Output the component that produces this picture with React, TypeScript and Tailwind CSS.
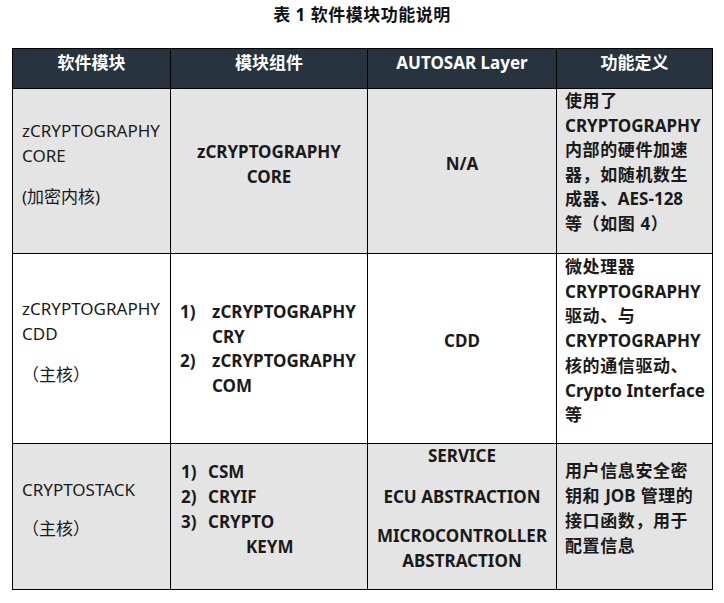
const font = "font-['Noto_Sans','Noto_Sans_CJK_SC',sans-serif]";

const cell = "border border-black align-top p-0";

export default function App() {
    return (
        <div className={`w-[724px] h-[603px] bg-white text-[#1a1a1a] ${font}`}>
            <h1 className="pt-[4px] h-[48px] text-center text-[17px] leading-[22px] font-bold tracking-[0.5px] text-[#111]">
                表 1 软件模块功能说明
            </h1>
            <table className="ml-[12px] w-[700px] table-fixed border-collapse text-[17px] leading-[25px]">
                <colgroup>
                    <col className="w-[158px]" />
                    <col className="w-[197px]" />
                    <col className="w-[189px]" />
                    <col className="w-[156px]" />
                </colgroup>
                <thead>
                    <tr className="h-[40px] bg-[#27333e] text-white font-bold">
                        <th className={`${cell} pt-[1px] text-center`}>软件模块</th>
                        <th className={`${cell} pt-[1px] text-center`}>模块组件</th>
                        <th className={`${cell} pt-[1px] text-center`}>AUTOSAR Layer</th>
                        <th className={`${cell} pt-[1px] text-center`}>功能定义</th>
                    </tr>
                </thead>
                <tbody>
                    <tr className="h-[165px] bg-[#e4e4e4]">
                        <td className={`${cell} pl-[9px] pt-[29px]`}>
                            <p>zCRYPTOGRAPHY<br />CORE</p>
                            <p className="mt-[16px]">(加密内核)</p>
                        </td>
                        <td className={`${cell} pt-[50px] text-center font-bold`}>
                            zCRYPTOGRAPHY<br />CORE
                        </td>
                        <td className={`${cell} pt-[62px] text-center font-bold`}>N/A</td>
                        <td className={`${cell} pl-[8px] whitespace-nowrap font-bold leading-[24.6px] tracking-[0.6px]`}>
                            使用了<br />
                            <span className="tracking-normal">CRYPTOGRAPHY</span><br />
                            内部的硬件加速<br />
                            器，如随机数生<br />
                            成器、<span className="tracking-normal">AES-128</span><br />
                            等（如图 4）
                        </td>
                    </tr>
                    <tr className="h-[190px] bg-white">
                        <td className={`${cell} pl-[9px] pt-[42px]`}>
                            <p>zCRYPTOGRAPHY<br />CDD</p>
                            <p className="mt-[16px]">（主核）</p>
                        </td>
                        <td className={`${cell} pl-[9px] pt-[46px] font-bold leading-[24.5px]`}>
                            <div className="flex">
                                <span className="w-[32px] shrink-0">1)</span>
                                <span>zCRYPTOGRAPHY<br />CRY</span>
                            </div>
                            <div className="flex">
                                <span className="w-[32px] shrink-0">2)</span>
                                <span>zCRYPTOGRAPHY<br />COM</span>
                            </div>
                        </td>
                        <td className={`${cell} pt-[74px] text-center font-bold`}>CDD</td>
                        <td className={`${cell} pl-[8px] pt-[1px] whitespace-nowrap font-bold leading-[24.7px] tracking-[0.6px]`}>
                            微处理器<br />
                            <span className="tracking-normal">CRYPTOGRAPHY</span><br />
                            驱动、与<br />
                            <span className="tracking-normal">CRYPTOGRAPHY</span><br />
                            核的通信驱动、<br />
                            <span className="tracking-normal">Crypto Interface</span><br />
                            等
                        </td>
                    </tr>
                    <tr className="h-[146px] bg-[#e4e4e4]">
                        <td className={`${cell} pl-[9px] pt-[33px]`}>
                            <p>CRYPTOSTACK</p>
                            <p className="mt-[14px]">（主核）</p>
                        </td>
                        <td className={`${cell} pl-[10px] pt-[15px] font-bold`}>
                            <div className="flex">
                                <span className="w-[27px] shrink-0">1)</span>
                                <span>CSM</span>
                            </div>
                            <div className="flex">
                                <span className="w-[27px] shrink-0">2)</span>
                                <span>CRYIF</span>
                            </div>
                            <div className="flex">
                                <span className="w-[27px] shrink-0">3)</span>
                                <span>CRYPTO</span>
                            </div>
                            <div className="pl-[65px]">KEYM</div>
                        </td>
                        <td className={`${cell} text-center font-bold leading-[24.5px]`}>
                            <p>SERVICE</p>
                            <p className="mt-[16px]">ECU ABSTRACTION</p>
                            <p className="mt-[15px]">MICROCONTROLLER<br />ABSTRACTION</p>
                        </td>
                        <td className={`${cell} pl-[8px] pt-[14px] whitespace-nowrap font-bold tracking-[0.6px]`}>
                            用户信息安全密<br />
                            钥和 <span className="tracking-normal">JOB</span> 管理的<br />
                            接口函数，用于<br />
                            配置信息
                        </td>
                    </tr>
                </tbody>
            </table>
        </div>
    );
}
